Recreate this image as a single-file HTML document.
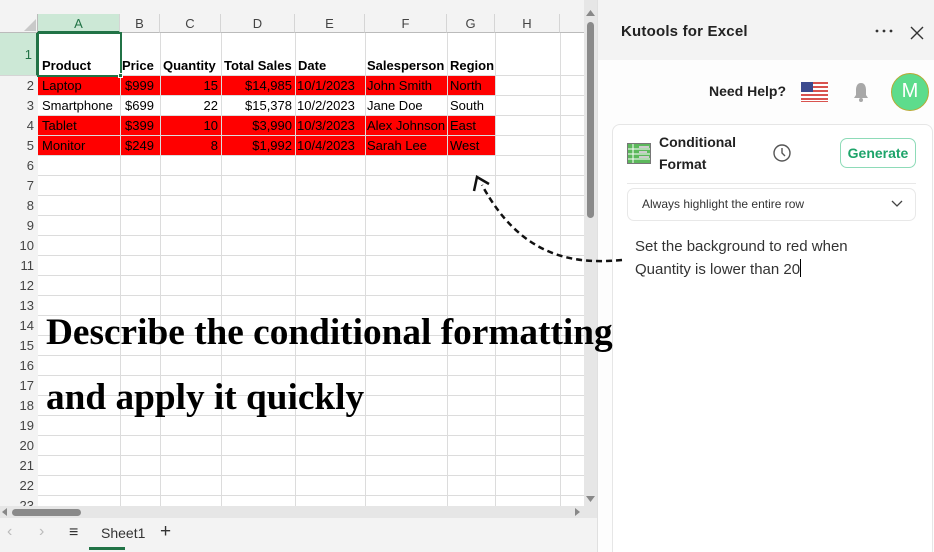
<!DOCTYPE html>
<html><head><meta charset="utf-8"><style>
*{margin:0;padding:0;box-sizing:border-box}
body{width:934px;height:552px;overflow:hidden;background:#fff;font-family:"Liberation Sans",sans-serif;position:relative}
.abs{position:absolute}
.grid{left:0;top:0;width:584px;height:506px;background:#fff;overflow:hidden}
.cell{position:absolute;font-size:13px;line-height:20px;white-space:nowrap;color:#000}
.rh{position:absolute;left:0;width:38px;text-align:right;padding-right:4px;font-size:13px;color:#444;background:#f3f3f3;border-bottom:1px solid #d5d5d5;line-height:20px}
.ch{position:absolute;top:14px;height:19px;text-align:center;font-size:13px;color:#444;line-height:19px;border-right:1px solid #d5d5d5;background:#f3f3f3;border-bottom:1px solid #bbb}
.vl{position:absolute;top:33px;width:1px;height:480px;background:#dcdcdc}
.hl{position:absolute;left:38px;width:546px;height:1px;background:#dcdcdc}
</style></head><body>
<div class="abs grid">
<div class="abs" style="left:0;top:0;width:584px;height:14px;background:#f3f3f3"></div>
<div class="abs" style="left:0;top:14px;width:38px;height:19px;background:#f3f3f3;border-right:1px solid #bbb;border-bottom:1px solid #bbb"></div>
<svg class="abs" style="left:24px;top:19px" width="12" height="12"><polygon points="12,0 12,12 0,12" fill="#c9c9c9"/></svg>
<div class="ch" style="left:38px;width:82px;background:#cce8d6;color:#217346;border-bottom:2px solid #217346">A</div>
<div class="ch" style="left:120px;width:40px">B</div>
<div class="ch" style="left:160px;width:61px">C</div>
<div class="ch" style="left:221px;width:74px">D</div>
<div class="ch" style="left:295px;width:70px">E</div>
<div class="ch" style="left:365px;width:82px">F</div>
<div class="ch" style="left:447px;width:48px">G</div>
<div class="ch" style="left:495px;width:65px">H</div>
<div class="ch" style="left:560px;width:30px;border-right:none"></div>
<div class="abs" style="left:38px;top:76px;width:457px;height:20px;background:#f00"></div>
<div class="abs" style="left:38px;top:116px;width:457px;height:40px;background:#f00"></div>
<div class="vl" style="left:120px"></div><div class="vl" style="left:160px"></div><div class="vl" style="left:221px"></div><div class="vl" style="left:295px"></div><div class="vl" style="left:365px"></div><div class="vl" style="left:447px"></div><div class="vl" style="left:495px"></div><div class="vl" style="left:560px"></div>
<div class="hl" style="top:75px"></div>
<div class="hl" style="top:95px"></div><div class="hl" style="top:115px"></div><div class="hl" style="top:135px"></div><div class="hl" style="top:155px"></div><div class="hl" style="top:175px"></div><div class="hl" style="top:195px"></div><div class="hl" style="top:215px"></div><div class="hl" style="top:235px"></div><div class="hl" style="top:255px"></div><div class="hl" style="top:275px"></div><div class="hl" style="top:295px"></div><div class="hl" style="top:315px"></div><div class="hl" style="top:335px"></div><div class="hl" style="top:355px"></div><div class="hl" style="top:375px"></div><div class="hl" style="top:395px"></div><div class="hl" style="top:415px"></div><div class="hl" style="top:435px"></div><div class="hl" style="top:455px"></div><div class="hl" style="top:475px"></div><div class="hl" style="top:495px"></div>
<div class="rh" style="top:33px;height:43px;line-height:43px;background:#cce8d6;color:#217346;border-right:2px solid #217346">1</div>
<div class="rh" style="top:76px">2</div><div class="rh" style="top:96px">3</div><div class="rh" style="top:116px">4</div><div class="rh" style="top:136px">5</div><div class="rh" style="top:156px">6</div><div class="rh" style="top:176px">7</div><div class="rh" style="top:196px">8</div><div class="rh" style="top:216px">9</div><div class="rh" style="top:236px">10</div><div class="rh" style="top:256px">11</div><div class="rh" style="top:276px">12</div><div class="rh" style="top:296px">13</div><div class="rh" style="top:316px">14</div><div class="rh" style="top:336px">15</div><div class="rh" style="top:356px">16</div><div class="rh" style="top:376px">17</div><div class="rh" style="top:396px">18</div><div class="rh" style="top:416px">19</div><div class="rh" style="top:436px">20</div><div class="rh" style="top:456px">21</div><div class="rh" style="top:476px">22</div><div class="rh" style="top:496px">23</div>
<div class="abs" style="left:37px;top:32px;width:85px;height:45px;border:2px solid #217346"></div>
<div class="abs" style="left:118px;top:73px;width:5px;height:5px;background:#217346;border:1px solid #fff"></div>
<div style="font-weight:bold">
<div class="cell" style="left:42px;top:56px">Product</div><div class="cell" style="left:122px;top:56px">Price</div><div class="cell" style="left:163px;top:56px">Quantity</div><div class="cell" style="left:224px;top:56px">Total Sales</div><div class="cell" style="left:298px;top:56px">Date</div><div class="cell" style="left:367px;top:56px">Salesperson</div><div class="cell" style="left:450px;top:56px">Region</div>
</div>
<div class="cell" style="left:42px;top:76px">Laptop</div><div class="cell" style="left:125px;top:76px">$999</div><div class="cell" style="left:160px;top:76px;width:58px;text-align:right">15</div><div class="cell" style="left:221px;top:76px;width:71px;text-align:right">$14,985</div><div class="cell" style="left:297px;top:76px">10/1/2023</div><div class="cell" style="left:367px;top:76px">John Smith</div><div class="cell" style="left:450px;top:76px">North</div>
<div class="cell" style="left:42px;top:96px">Smartphone</div><div class="cell" style="left:125px;top:96px">$699</div><div class="cell" style="left:160px;top:96px;width:58px;text-align:right">22</div><div class="cell" style="left:221px;top:96px;width:71px;text-align:right">$15,378</div><div class="cell" style="left:297px;top:96px">10/2/2023</div><div class="cell" style="left:367px;top:96px">Jane Doe</div><div class="cell" style="left:450px;top:96px">South</div>
<div class="cell" style="left:42px;top:116px">Tablet</div><div class="cell" style="left:125px;top:116px">$399</div><div class="cell" style="left:160px;top:116px;width:58px;text-align:right">10</div><div class="cell" style="left:221px;top:116px;width:71px;text-align:right">$3,990</div><div class="cell" style="left:297px;top:116px">10/3/2023</div><div class="cell" style="left:367px;top:116px">Alex Johnson</div><div class="cell" style="left:450px;top:116px">East</div>
<div class="cell" style="left:42px;top:136px">Monitor</div><div class="cell" style="left:125px;top:136px">$249</div><div class="cell" style="left:160px;top:136px;width:58px;text-align:right">8</div><div class="cell" style="left:221px;top:136px;width:71px;text-align:right">$1,992</div><div class="cell" style="left:297px;top:136px">10/4/2023</div><div class="cell" style="left:367px;top:136px">Sarah Lee</div><div class="cell" style="left:450px;top:136px">West</div>
</div>
<div class="abs" style="left:584px;top:0;width:13px;height:506px;background:#e6e6e6"></div>
<svg class="abs" style="left:584px;top:8px" width="13" height="10"><polygon points="6.5,2 11,8 2,8" fill="#888"/></svg>
<div class="abs" style="left:587px;top:22px;width:7px;height:196px;background:#8a8a8a;border-radius:4px"></div>
<svg class="abs" style="left:584px;top:494px" width="13" height="10"><polygon points="2,2 11,2 6.5,8" fill="#888"/></svg>
<div class="abs" style="left:0;top:506px;width:597px;height:12px;background:#e6e6e6"></div>
<svg class="abs" style="left:0;top:506px" width="10" height="12"><polygon points="7,2 7,10 2,6" fill="#888"/></svg>
<div class="abs" style="left:12px;top:509px;width:69px;height:7px;background:#8a8a8a;border-radius:4px"></div>
<svg class="abs" style="left:572px;top:506px" width="10" height="12"><polygon points="3,2 3,10 8,6" fill="#888"/></svg>
<div class="abs" style="left:0;top:518px;width:597px;height:34px;background:#f3f3f3"></div>
<div class="abs" style="left:7px;top:523px;font-size:16px;color:#bbb">‹</div>
<div class="abs" style="left:39px;top:523px;font-size:16px;color:#bbb">›</div>
<div class="abs" style="left:69px;top:524px;font-size:16px;color:#333">≡</div>
<div class="abs" style="left:101px;top:525px;font-size:14px;color:#333">Sheet1</div>
<div class="abs" style="left:89px;top:547px;width:36px;height:3px;background:#217346"></div>
<div class="abs" style="left:160px;top:521px;font-size:19px;color:#333">+</div>
<div class="abs" style="left:597px;top:0;width:337px;height:552px;background:#f3f3f3;border-left:1px solid #e0e0e0"></div>
<div class="abs" style="left:621px;top:23px;font-size:15px;color:#222;font-weight:bold;letter-spacing:0.2px">Kutools for Excel</div>
<svg class="abs" style="left:874px;top:28px" width="20" height="6"><circle cx="3" cy="3" r="1.4" fill="#333"/><circle cx="10" cy="3" r="1.4" fill="#333"/><circle cx="17" cy="3" r="1.4" fill="#333"/></svg>
<svg class="abs" style="left:909px;top:25px" width="16" height="16"><path d="M2 2L14 14M14 2L2 14" stroke="#333" stroke-width="1.4"/></svg>
<div class="abs" style="left:598px;top:60px;width:336px;height:492px;background:#fdfdfd"></div>
<div class="abs" style="left:709px;top:83px;font-size:14px;font-weight:bold;color:#222">Need Help?</div>
<svg class="abs" style="left:801px;top:82px" width="27" height="20"><rect width="27" height="20" rx="3" fill="#fff"/><g fill="#d9534f"><rect y="0" width="27" height="2"/><rect y="4" width="27" height="2"/><rect y="8" width="27" height="2"/><rect y="12" width="27" height="2"/><rect y="16" width="27" height="2"/><rect y="19" width="27" height="1"/></g><rect width="12" height="10" fill="#3c4a8e"/></svg>
<svg class="abs" style="left:852px;top:81px" width="18" height="22"><path d="M9 2C5 2 4 6 4 9v5l-2 3h14l-2-3V9c0-3-1-7-5-7z" fill="#a8a8a8"/><circle cx="9" cy="19" r="2" fill="#a8a8a8"/></svg>
<div class="abs" style="left:891px;top:73px;width:38px;height:38px;border-radius:50%;background:#5ddc8c;border:1.5px solid #b7a934;color:#fff;font-size:20px;text-align:center;line-height:35px">M</div>
<div class="abs" style="left:612px;top:124px;width:321px;height:428px;background:#fff;border:1px solid #e6e6e6;border-bottom:none;border-radius:8px 8px 0 0"></div>
<svg class="abs" style="left:627px;top:143px" width="24" height="21"><rect x="0.5" y="0.5" width="23" height="20" fill="#5cb85c" stroke="#777"/><g stroke="#fff" stroke-width="1"><line x1="6" y1="1" x2="6" y2="20"/><line x1="1" y1="6" x2="23" y2="6"/><line x1="1" y1="11" x2="23" y2="11"/><line x1="1" y1="16" x2="23" y2="16"/></g><rect x="12" y="3" width="10" height="2" fill="#ccc"/><rect x="12" y="8" width="8" height="2" fill="#ccc"/><rect x="12" y="13" width="10" height="2" fill="#ccc"/></svg>
<div class="abs" style="left:659px;top:131px;font-size:14px;color:#222;line-height:22px;font-weight:bold">Conditional<br>Format</div>
<svg class="abs" style="left:772px;top:143px" width="20" height="20"><circle cx="10" cy="10" r="8" fill="none" stroke="#555" stroke-width="1.4"/><path d="M10 5v5l3 3" fill="none" stroke="#555" stroke-width="1.4"/></svg>
<div class="abs" style="left:840px;top:138px;width:76px;height:30px;border:1px solid #8edbb8;border-radius:7px;color:#1ea46a;font-weight:bold;font-size:14px;text-align:center;line-height:28px">Generate</div>
<div class="abs" style="left:627px;top:183px;width:289px;height:1px;background:#e8e8e8"></div>
<div class="abs" style="left:627px;top:188px;width:289px;height:33px;border:1px solid #e8e8e8;border-radius:7px;font-size:12px;color:#333;padding-left:14px;line-height:31px">Always highlight the entire row</div>
<svg class="abs" style="left:891px;top:200px" width="12" height="8"><path d="M1 1l5 5 5-5" fill="none" stroke="#444" stroke-width="1.3"/></svg>
<div class="abs" style="left:635px;top:235px;font-size:15px;color:#333;line-height:23px">Set the background to red when<br>Quantity is lower than 20<span style="display:inline-block;width:1px;height:18px;background:#000;vertical-align:-3px"></span></div>
<div class="abs" style="left:46px;top:313px;font-family:'Liberation Serif',serif;font-weight:bold;font-size:37.3px;color:#000;white-space:nowrap;line-height:40px">Describe the conditional formatting</div>
<div class="abs" style="left:46px;top:378px;font-family:'Liberation Serif',serif;font-weight:bold;font-size:37.3px;color:#000;white-space:nowrap;line-height:40px">and apply it quickly</div>
<svg class="abs" style="left:460px;top:165px" width="170" height="110"><path d="M162 95C110 100 60 90 22 20" fill="none" stroke="#111" stroke-width="2.5" stroke-dasharray="6,4"/><path d="M14 26L17 12L29 19" fill="none" stroke="#111" stroke-width="2.5"/></svg>
</body></html>
